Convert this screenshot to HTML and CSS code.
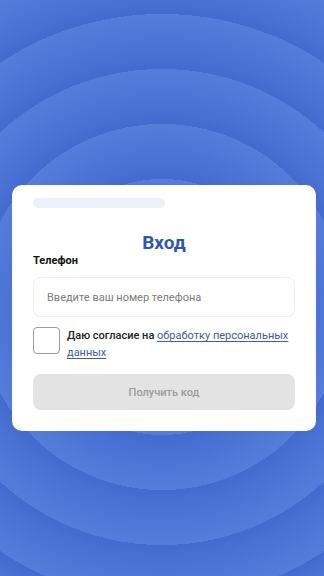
FILE: index.html
```html
<!DOCTYPE html>
<html lang="ru">
<head>
<meta charset="utf-8">
<title>Вход</title>
<link rel="stylesheet" href="styles.css">
</head>
<body>
<main class="screen">
  <section class="card">
    <div class="skeleton"></div>
    <h1 class="title">Вход</h1>
    <label class="label" for="phone">Телефон</label>
    <div class="input">
      <span class="placeholder">Введите ваш номер телефона</span>
    </div>
    <div class="consent">
      <span class="checkbox"></span>
      <p class="consent-text">Даю согласие на <a href="#" class="link">обработку персональных данных</a></p>
    </div>
    <button class="button" type="button">Получить код</button>
  </section>
</main>
</body>
</html>
```

FILE: styles.css
```css
* { box-sizing: border-box; }
html, body { margin: 0; padding: 0; }
body {
  width: 324px;
  height: 576px;
  overflow: hidden;
  font-family: Roboto, "Noto Sans", Arial, sans-serif;
  background-color: #4a72d4;
  background-image: repeating-radial-gradient(circle at 162px 307px,
    #426acf 18px, #476fd2 28px, #4d76d6 50px, #547ddb 72px, #5680dc 73px);
}
.screen {
  padding: 185px 8px 0 12px;
}
.card {
  width: 304px;
  background: #fff;
  border-radius: 10px;
  padding: 13px 21px 21px;
  display: flex;
  flex-direction: column;
}
.skeleton {
  width: 132px;
  height: 10px;
  border-radius: 5px;
  background: #edf0f8;
}
.title {
  margin: 24px 0 0;
  font-size: 19px;
  line-height: 22px;
  font-weight: 700;
  color: #2e56b6;
  text-align: center;
}
.label {
  margin-top: 0;
  font-size: 11px;
  line-height: 14px;
  font-weight: 700;
  color: #111;
}
.input {
  margin-top: 9px;
  height: 40px;
  border: 1px solid #f0f0f0;
  border-radius: 8px;
  display: flex;
  align-items: center;
  padding-left: 13px;
}
.placeholder {
  font-size: 11px;
  color: #7c7c7c;
}
.consent {
  margin-top: 10px;
  display: flex;
  gap: 7px;
  align-items: flex-start;
}
.checkbox {
  flex: none;
  width: 27px;
  height: 27px;
  border: 1px solid #9b9b9b;
  border-radius: 4px;
}
.consent-text {
  margin: 0;
  padding-top: 1px;
  font-size: 11px;
  line-height: 16.5px;
  font-weight: 500;
  color: #222;
}
.link {
  color: #3d5da9;
  font-weight: 400;
  text-decoration: underline;
  text-underline-offset: 2px;
}
.button {
  margin-top: 13px;
  height: 36px;
  border: none;
  border-radius: 8px;
  background: #e3e3e3;
  font-family: inherit;
  font-size: 11px;
  font-weight: 500;
  color: #9c9c9c;
}
```
